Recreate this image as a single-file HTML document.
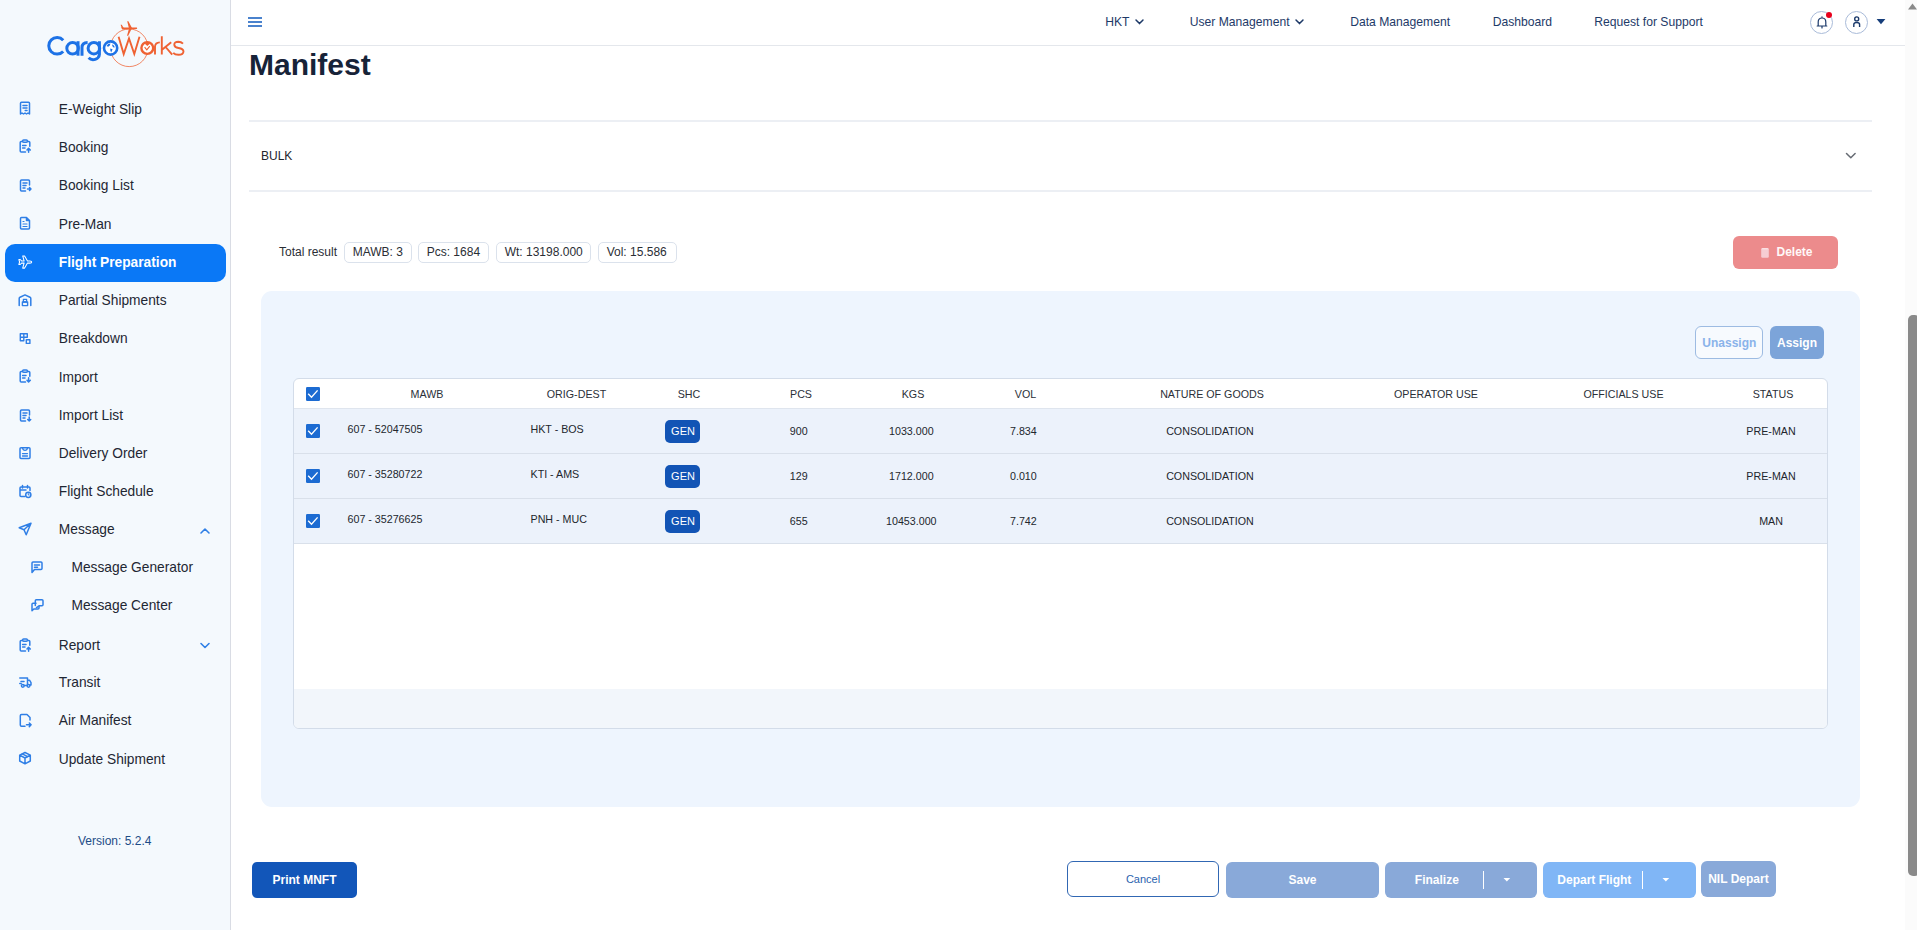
<!DOCTYPE html><html><head><meta charset="utf-8"><style>
*{box-sizing:border-box;margin:0;padding:0}
html,body{width:1917px;height:930px;overflow:hidden;background:#fff;font-family:"Liberation Sans",sans-serif;position:relative}
.a{position:absolute}
.t{position:absolute;white-space:nowrap;line-height:1}
.c{position:absolute;white-space:nowrap;line-height:1;width:240px;text-align:center}
#side{position:absolute;left:0;top:0;width:231px;height:930px;background:#f4f9fd;border-right:1px solid #d9dce4}
.si{font-size:13.75px;color:#1f2733}
.ic{position:absolute;overflow:visible}
.ic *{fill:none;stroke:#2f7fe6;stroke-width:1.5;stroke-linecap:round;stroke-linejoin:round}
#hdr{position:absolute;left:231px;top:0;width:1674px;height:46px;border-bottom:1px solid #e4e7ec;background:#fff}
.nav{font-size:12.15px;color:#1e3a68}
.th{font-size:10.7px;color:#2b3038}
.td{font-size:10.7px;color:#22262d}
.chip{position:absolute;top:242px;height:21px;border:1px solid #dbe2ec;border-radius:5px;background:#fff}
.cb{position:absolute;width:14px;height:14px;border-radius:2px;background:#1f6fd6}
.gen{position:absolute;width:35px;height:23px;border-radius:5px;background:#1254b5}
</style></head><body>
<div id="side"></div>
<svg class="a" style="left:40px;top:15px" width="150" height="60" viewBox="40 15 150 60">
<g fill="none" stroke="#1d72e6" stroke-width="3" stroke-linecap="butt">
<path d="M63.2 40.2 A8.3 8.3 0 1 0 63.2 51.4"/>
<circle cx="72.6" cy="48.3" r="5.8"/>
<path d="M78 41.2 V55.7"/>
<path d="M82 55.7 V47.5 Q82 42.4 87.6 42.4"/>
<circle cx="93.9" cy="48.2" r="5.8"/>
<path d="M99.4 41.2 V54.5 A6.2 5.5 0 0 1 88.6 57.8"/>
</g>
<circle cx="129.2" cy="47.8" r="18.8" fill="none" stroke="#ef6233" stroke-width="0.75"/>
<circle cx="110.6" cy="48" r="6.6" fill="#fff" stroke="#1d72e6" stroke-width="2.6"/>
<path d="M106.5 46 Q108 43.5 110.5 43.6 L109.8 45.5 L108.2 46.8 Z M110.2 48.6 L112.6 49.2 L111.2 52.6 L110.4 50.8 Z M112.4 44.2 Q114.6 45.4 114.8 47.6 L113 47.2 L112.2 45.6 Z" fill="#1d72e6"/>
<g fill="none" stroke="#ef6233" stroke-width="1.9" stroke-linejoin="miter">
<path d="M118.6 36.8 L123.7 54 L129 38.4 L134.3 54 L139.5 36.8"/>
<path d="M155 54.6 V46.5 Q155.3 42.6 159.8 42.4"/>
<path d="M161.8 36.2 V54.6 M171.2 42.2 L162 49.8 M165.6 47 L172.2 54.6"/>
<path d="M183 43.6 Q181.2 41.8 178.4 41.8 Q174.2 41.9 174.3 44.8 Q174.6 47.4 178.5 48 Q183.4 48.8 183.5 51.5 Q183.3 54.8 178.5 54.8 Q175 54.8 173.2 52.8"/>
</g>
<circle cx="147.3" cy="48" r="5.9" fill="#fff" stroke="#ef6233" stroke-width="2.4"/>
<path d="M144.6 47.2 l2.2 2.6 l3 -3.6" fill="none" stroke="#ef6233" stroke-width="1.1"/>
<path d="M144.5 43.6 Q147.3 42 150.2 43.6 L147.3 46z" fill="#ef6233"/>
<g fill="#ef6233">
<path d="M121 27.6 L136.8 27.4 Q137.6 28.3 136.8 29.1 L122.6 29.4 Z"/>
<path d="M127.2 21.2 L128.4 21.2 L132 28 L128.2 35.8 L127 35.8 L129 28.4 Z"/>
<path d="M120.6 24.8 L121.8 24.8 L124 28.4 L122.2 29.3 Z"/>
</g>
</svg>
<div class="a" style="left:5px;top:244px;width:221px;height:38px;border-radius:10px;background:#0a78f6"></div>
<div class="t si" style="left:58.8px;top:102.66px">E-Weight Slip</div>
<svg class="ic" style="left:17.5px;top:101.30px" width="14" height="14" viewBox="0 0 14 14"><path d="M2.5 2.2 Q2.5 1.2 3.5 1.2 H10.5 Q11.5 1.2 11.5 2.2 V13 L10 12 L8.5 13 L7 12 L5.5 13 L4 12 L2.5 13 Z"/><path d="M5 4.6 H9 M5 6.9 H9 M7.2 9.4 H9"/></svg>
<div class="t si" style="left:58.8px;top:140.76px">Booking</div>
<svg class="ic" style="left:17.5px;top:139.40px" width="14" height="14" viewBox="0 0 14 14"><path d="M4.3 2.6 H3.2 Q2.2 2.6 2.2 3.6 V12 Q2.2 13 3.2 13 H7.5 M9.7 2.6 H10.8 Q11.8 2.6 11.8 3.6 V7.2"/><path d="M4.6 2 Q4.6 1 5.6 1 H8.4 Q9.4 1 9.4 2 Q9.4 3.2 8.4 3.2 H5.6 Q4.6 3.2 4.6 2Z"/><path d="M4.6 6.5 H8 M4.6 9 H7"/><path d="M10.6 13.2 V9.6 M9 11 L10.6 9.3 L12.3 11"/></svg>
<div class="t si" style="left:58.8px;top:179.36px">Booking List</div>
<svg class="ic" style="left:17.5px;top:178.00px" width="14" height="14" viewBox="0 0 14 14"><path d="M11.5 7 V3 Q11.5 2 10.5 2 H3.5 Q2.5 2 2.5 3 V12 Q2.5 13 3.5 13 H7.5"/><path d="M5 5 H9 M5 7.5 H8 M5 10 H7"/><path d="M9.5 11 H13 M11.5 9.5 L13 11 L11.5 12.5"/></svg>
<div class="t si" style="left:58.8px;top:217.56px">Pre-Man</div>
<svg class="ic" style="left:17.5px;top:216.20px" width="14" height="14" viewBox="0 0 14 14"><path d="M8.5 1.5 H3.5 Q2.5 1.5 2.5 2.5 V12 Q2.5 13 3.5 13 H10.5 Q11.5 13 11.5 12 V4.5 Z M8.5 1.5 V4.5 H11.5"/><path d="M5 5.5 H6 M5 8 H9 M5 10.5 H9" style="stroke-width:1.2"/></svg>
<div class="t si" style="left:58.8px;top:255.86px;color:#fff;font-weight:bold">Flight Preparation</div>
<svg class="ic" style="left:17.5px;top:254.50px" width="14" height="14" viewBox="0 0 14 14"><path d="M0.9 4.5 H2.2 L3.6 5.9 H6.1 L4.7 0.9 H6.6 L9.5 5.9 H12 Q13.7 5.9 13.7 7 Q13.7 8.1 12 8.1 H9.5 L6.6 13.1 H4.7 L6.1 8.1 H3.6 L2.2 9.5 H0.9 L1.6 7 Z" style="stroke:#fff;stroke-width:1.05"/></svg>
<div class="t si" style="left:58.8px;top:294.06px">Partial Shipments</div>
<svg class="ic" style="left:17.5px;top:292.70px" width="14" height="14" viewBox="0 0 14 14"><path d="M1.2 12.6 V5.4 Q1.2 4.6 2 4.2 L7 1.9 L12 4.2 Q12.8 4.6 12.8 5.4 V12.6"/><rect x="4.4" y="9" width="5.2" height="3.6" style="stroke-width:1.4"/><rect x="5.4" y="6.4" width="3.2" height="2.6" style="stroke-width:1.3"/></svg>
<div class="t si" style="left:58.8px;top:332.36px">Breakdown</div>
<svg class="ic" style="left:17.5px;top:331.00px" width="14" height="14" viewBox="0 0 14 14"><path d="M2.3 2.8 H9.3 V6.3 H5.8 V9.8 H2.3 Z M5.8 2.8 V6.3 H2.3" style="stroke-width:1.4"/><rect x="8.3" y="8.8" width="3.6" height="3.6" style="stroke-width:1.4"/></svg>
<div class="t si" style="left:58.8px;top:370.56px">Import</div>
<svg class="ic" style="left:17.5px;top:369.20px" width="14" height="14" viewBox="0 0 14 14"><path d="M4.3 2.6 H3.2 Q2.2 2.6 2.2 3.6 V12 Q2.2 13 3.2 13 H7.5 M9.7 2.6 H10.8 Q11.8 2.6 11.8 3.6 V7.2"/><path d="M4.6 2 Q4.6 1 5.6 1 H8.4 Q9.4 1 9.4 2 Q9.4 3.2 8.4 3.2 H5.6 Q4.6 3.2 4.6 2Z"/><path d="M4.6 6.5 H8 M4.6 9 H7"/><path d="M10.6 8.8 V12.8 M9 11.3 L10.6 13 L12.3 11.3"/></svg>
<div class="t si" style="left:58.8px;top:408.86px">Import List</div>
<svg class="ic" style="left:17.5px;top:407.50px" width="14" height="14" viewBox="0 0 14 14"><path d="M11.5 7 V3 Q11.5 2 10.5 2 H3.5 Q2.5 2 2.5 3 V12 Q2.5 13 3.5 13 H7.5"/><path d="M5 5 H9 M5 7.5 H8 M5 10 H7"/><path d="M11.2 9 V13 M9.7 11.5 L11.2 13 L12.7 11.5"/></svg>
<div class="t si" style="left:58.8px;top:447.06px">Delivery Order</div>
<svg class="ic" style="left:17.5px;top:445.70px" width="14" height="14" viewBox="0 0 14 14"><rect x="2" y="1.8" width="10" height="10.6" rx="1"/><path d="M4.6 2.2 Q5 4.4 7 4.4 Q9 4.4 9.4 2.2 M4.5 7.6 H9.5 M4.5 10 H9.5" style="stroke-width:1.3"/></svg>
<div class="t si" style="left:58.8px;top:485.26px">Flight Schedule</div>
<svg class="ic" style="left:17.5px;top:483.90px" width="14" height="14" viewBox="0 0 14 14"><path d="M7 12.5 H3 Q2 12.5 2 11.5 V4 Q2 3 3 3 H11 Q12 3 12 4 V6.5 M2 6 H8 M4.5 1.5 V4 M9.5 1.5 V4"/><circle cx="10.3" cy="10.8" r="2.6"/><path d="M10.3 9.6 V11 H11.2" style="stroke-width:1"/></svg>
<div class="t si" style="left:58.8px;top:523.36px">Message</div>
<svg class="ic" style="left:17.5px;top:522.00px" width="14" height="14" viewBox="0 0 14 14"><path d="M13 1.2 L1.2 5.8 L6 7.8 L8.2 12.8 Z M13 1.2 L6 7.8"/></svg>
<div class="t si" style="left:71.5px;top:561.46px">Message Generator</div>
<svg class="ic" style="left:29.5px;top:560.10px" width="14" height="14" viewBox="0 0 14 14"><path d="M2 12.5 V3 Q2 2 3 2 H11 Q12 2 12 3 V8.5 Q12 9.5 11 9.5 H4.5 Z"/><path d="M4.5 5 H9.5 M4.5 7.2 H7.5"/></svg>
<div class="t si" style="left:71.5px;top:599.46px">Message Center</div>
<svg class="ic" style="left:29.5px;top:598.10px" width="14" height="14" viewBox="0 0 14 14"><path d="M6 5.2 H3 Q2 5.2 2 6.2 V12.8 L3.8 11 H8 Q9 11 9 10 V8.6"/><path d="M5.3 7.5 V2.8 Q5.3 1.8 6.3 1.8 H12 Q13 1.8 13 2.8 V6.8 Q13 7.8 12 7.8 H9 L6.5 9.6"/></svg>
<div class="t si" style="left:58.8px;top:639.06px">Report</div>
<svg class="ic" style="left:17.5px;top:637.70px" width="14" height="14" viewBox="0 0 14 14"><path d="M4.3 2.6 H3.2 Q2.2 2.6 2.2 3.6 V12 Q2.2 13 3.2 13 H7.5 M9.7 2.6 H10.8 Q11.8 2.6 11.8 3.6 V7.2"/><path d="M4.6 2 Q4.6 1 5.6 1 H8.4 Q9.4 1 9.4 2 Q9.4 3.2 8.4 3.2 H5.6 Q4.6 3.2 4.6 2Z"/><path d="M4.6 6.5 H8 M4.6 9 H7"/><path d="M10.6 13.2 V9.6 M9 11 L10.6 9.3 L12.3 11"/></svg>
<div class="t si" style="left:58.8px;top:676.46px">Transit</div>
<svg class="ic" style="left:17.5px;top:675.10px" width="14" height="14" viewBox="0 0 14 14"><path d="M1.8 3 H9.5 V10 M3 6.5 H6 M1.8 8.5 H3.2 M9.5 5.2 H11.5 L13 7.6 V10 H12"/><circle cx="4.8" cy="10.8" r="1.4"/><circle cx="10.5" cy="10.8" r="1.4"/><path d="M6.3 10.5 H9"/></svg>
<div class="t si" style="left:58.8px;top:714.46px">Air Manifest</div>
<svg class="ic" style="left:17.5px;top:713.10px" width="14" height="14" viewBox="0 0 14 14"><path d="M12 7 V4.5 L9 1.5 H3.5 Q2.3 1.5 2.3 2.7 V12 Q2.3 13.2 3.5 13.2 H7"/><path d="M8.5 11.8 H13 M11.3 10 L13.1 11.8 L11.3 13.6"/></svg>
<div class="t si" style="left:58.8px;top:752.76px">Update Shipment</div>
<svg class="ic" style="left:17.5px;top:751.40px" width="14" height="14" viewBox="0 0 14 14"><path d="M7 1.5 L12.3 4.2 V10 L7 12.8 L1.7 10 V4.2 Z M1.7 4.2 L7 7 L12.3 4.2 M7 7 V12.8"/><path d="M4.3 2.8 L9.6 5.6"/></svg>
<svg class="ic" style="left:199px;top:525px" width="12" height="10" viewBox="0 0 12 10"><path d="M2 8 L6 4 L10 8" style="stroke:#2f7fe6;stroke-width:1.6"/></svg>
<svg class="ic" style="left:199px;top:640px" width="12" height="10" viewBox="0 0 12 10"><path d="M2 3.5 L6 7.5 L10 3.5" style="stroke:#2f7fe6;stroke-width:1.6"/></svg>
<div class="t" style="left:78px;top:834.84px;font-size:12px;color:#1d4c86">Version: 5.2.4</div>
<div id="hdr"></div>
<div class="a" style="left:248px;top:17px;width:14px;height:2px;background:#4a82cd"></div>
<div class="a" style="left:248px;top:21px;width:14px;height:2px;background:#4a82cd"></div>
<div class="a" style="left:248px;top:25px;width:14px;height:2px;background:#4a82cd"></div>
<div class="t nav" style="left:1105.2px;top:15.94px">HKT</div>
<div class="t nav" style="left:1189.7px;top:15.94px">User Management</div>
<div class="t nav" style="left:1350.2px;top:15.94px">Data Management</div>
<div class="t nav" style="left:1492.7px;top:15.94px">Dashboard</div>
<div class="t nav" style="left:1594.2px;top:15.94px">Request for Support</div>
<svg class="ic" style="left:1135px;top:18px" width="10" height="8" viewBox="0 0 10 8"><path d="M1 2 L4.5 5.6 L8 2" style="stroke:#1e3a68;stroke-width:1.5"/></svg>
<svg class="ic" style="left:1295px;top:18px" width="10" height="8" viewBox="0 0 10 8"><path d="M1 2 L4.5 5.6 L8 2" style="stroke:#1e3a68;stroke-width:1.5"/></svg>
<div class="a" style="left:1810px;top:11px;width:23px;height:23px;border-radius:50%;border:1px solid #a9bbd9"></div>
<svg class="ic" style="left:1814px;top:14px" width="16" height="16" viewBox="0 0 16 16"><path d="M4.2 12 V8 Q4.2 4 8 4 Q11.8 4 11.8 8 V12 H3.2 H12.8 M8 4 V2.8 M8 12 V14" style="stroke:#1c3a6b;stroke-width:1.2"/></svg>
<div class="a" style="left:1826px;top:12px;width:6px;height:6px;border-radius:50%;background:#e8001c"></div>
<div class="a" style="left:1845px;top:11px;width:23px;height:23px;border-radius:50%;border:1px solid #a9bbd9"></div>
<svg class="ic" style="left:1849px;top:14px" width="16" height="16" viewBox="0 0 16 16"><circle cx="7.7" cy="4.9" r="2" style="stroke:#1c3a6b;stroke-width:1.4"/><path d="M4.8 13 V10.5 Q4.8 8.5 7.7 8.5 Q10.6 8.5 10.6 10.5 V13" style="stroke:#1c3a6b;stroke-width:1.4;stroke-linecap:butt"/></svg>
<svg class="a" style="left:1876px;top:19px" width="10" height="6" viewBox="0 0 10 6"><path d="M0.6 0 H9.4 L5 5.2 Z" fill="#153d7a"/></svg>
<div class="a" style="left:1905px;top:0;width:12px;height:930px;background:#fbfbfb"></div>
<svg class="a" style="left:1906px;top:1px" width="11" height="10" viewBox="0 0 11 10"><path d="M2 8.5 L6.5 2.6 L11 8.5 Z" fill="#8a8a8a"/></svg>
<div class="a" style="left:1908px;top:315px;width:12px;height:561px;border-radius:5px;background:#8a8a8a"></div>
<div class="t" style="left:249px;top:49.6px;font-size:30px;font-weight:bold;color:#172338">Manifest</div>
<div class="a" style="left:249px;top:120px;width:1623px;height:1.5px;background:#eceff4"></div>
<div class="t" style="left:261px;top:149.84px;font-size:12px;color:#23262c">BULK</div>
<svg class="ic" style="left:1845px;top:152px" width="12" height="8" viewBox="0 0 12 8"><path d="M1.5 1.5 L5.8 5.8 L10.1 1.5" style="stroke:#666b73;stroke-width:1.5"/></svg>
<div class="a" style="left:249px;top:190px;width:1623px;height:1.5px;background:#eceff4"></div>
<div class="t" style="left:279px;top:245.84px;font-size:12px;color:#2a2e35">Total result</div>
<div class="chip" style="left:344px;width:68px"></div>
<div class="t" style="left:352.7px;top:245.84px;font-size:12px;color:#2a2e35">MAWB: 3</div>
<div class="chip" style="left:418px;width:71px"></div>
<div class="t" style="left:426.7px;top:245.84px;font-size:12px;color:#2a2e35">Pcs: 1684</div>
<div class="chip" style="left:496px;width:95px"></div>
<div class="t" style="left:504.7px;top:245.84px;font-size:12px;color:#2a2e35">Wt: 13198.000</div>
<div class="chip" style="left:598px;width:79px"></div>
<div class="t" style="left:606.7px;top:245.84px;font-size:12px;color:#2a2e35">Vol: 15.586</div>
<div class="a" style="left:1733px;top:236px;width:105px;height:33px;border-radius:6px;background:#ec8b8c"></div>
<svg class="a" style="left:1760px;top:247px" width="10" height="12" viewBox="0 0 10 12"><path d="M1.2 2.2 Q1.2 1 2.4 1 H7.6 Q8.8 1 8.8 2.2 V9.6 Q8.8 10.8 7.6 10.8 H2.4 Q1.2 10.8 1.2 9.6 Z" fill="#f6cdd2"/><path d="M2.2 1.8 H7.8" stroke="#fde9ea" stroke-width="1"/></svg>
<div class="t" style="left:1776.5px;top:245.84px;font-size:12px;font-weight:bold;color:#fff8f8">Delete</div>
<div class="a" style="left:261px;top:291px;width:1599px;height:516px;border-radius:11px;background:#eef5fe"></div>
<div class="a" style="left:1695px;top:326px;width:68px;height:33px;border-radius:6px;border:1px solid #9dbbe2;background:#f7fafe"></div>
<div class="t" style="left:1702.3px;top:336.84px;font-size:12px;font-weight:bold;color:#8ab3ea">Unassign</div>
<div class="a" style="left:1770px;top:326px;width:54px;height:33px;border-radius:6px;background:#7ca4d9"></div>
<div class="t" style="left:1777px;top:336.84px;font-size:12px;font-weight:bold;color:#fff">Assign</div>
<div class="a" style="left:293px;top:378px;width:1535px;height:351px;border-radius:6px;background:#fff;border:1px solid #d3dce9;overflow:hidden"><div class="a" style="left:0;top:29px;width:100%;height:1px;background:#dfe5ee"></div><div class="a" style="left:0;top:30px;width:100%;height:44px;background:#ecf2fb"></div><div class="a" style="left:0;top:74px;width:100%;height:1px;background:#d9e0ea"></div><div class="a" style="left:0;top:75px;width:100%;height:44px;background:#ecf2fb"></div><div class="a" style="left:0;top:119px;width:100%;height:1px;background:#d9e0ea"></div><div class="a" style="left:0;top:120px;width:100%;height:44px;background:#ecf2fb"></div><div class="a" style="left:0;top:164px;width:100%;height:1px;background:#d9e0ea"></div><div class="a" style="left:0;top:310px;width:100%;height:40px;background:#f2f6fb"></div></div>
<svg class="a" style="left:306px;top:387px" width="14" height="14" viewBox="0 0 14 14"><rect x="0" y="0" width="14" height="14" rx="1.3" fill="#1c6bd2"/><path d="M2.2 6.7 L5.5 10.2 L11.6 3.4" fill="none" stroke="#fff" stroke-width="1.35"/></svg>
<div class="c th" style="left:307px;top:388.94px">MAWB</div>
<div class="c th" style="left:456.5px;top:388.94px">ORIG-DEST</div>
<div class="c th" style="left:569px;top:388.94px">SHC</div>
<div class="c th" style="left:681px;top:388.94px">PCS</div>
<div class="c th" style="left:793px;top:388.94px">KGS</div>
<div class="c th" style="left:905.5px;top:388.94px">VOL</div>
<div class="c th" style="left:1092px;top:388.94px">NATURE OF GOODS</div>
<div class="c th" style="left:1316px;top:388.94px">OPERATOR USE</div>
<div class="c th" style="left:1503.5px;top:388.94px">OFFICIALS USE</div>
<div class="c th" style="left:1653px;top:388.94px">STATUS</div>
<svg class="a" style="left:306px;top:424px" width="14" height="14" viewBox="0 0 14 14"><rect x="0" y="0" width="14" height="14" rx="1.3" fill="#1c6bd2"/><path d="M2.2 6.7 L5.5 10.2 L11.6 3.4" fill="none" stroke="#fff" stroke-width="1.35"/></svg>
<div class="t td" style="left:347.5px;top:423.94px">607 - 52047505</div>
<div class="t td" style="left:530.5px;top:423.94px">HKT - BOS</div>
<div class="gen" style="left:665px;top:420px"></div>
<div class="c" style="left:563px;top:425.69px;font-size:11px;color:#fff">GEN</div>
<div class="t td" style="left:789.8px;top:425.94px">900</div>
<div class="c td" style="left:791.3px;top:425.94px">1033.000</div>
<div class="c td" style="left:903.4px;top:425.94px">7.834</div>
<div class="c td" style="left:1090px;top:425.94px">CONSOLIDATION</div>
<div class="c td" style="left:1651px;top:425.94px">PRE-MAN</div>
<svg class="a" style="left:306px;top:469px" width="14" height="14" viewBox="0 0 14 14"><rect x="0" y="0" width="14" height="14" rx="1.3" fill="#1c6bd2"/><path d="M2.2 6.7 L5.5 10.2 L11.6 3.4" fill="none" stroke="#fff" stroke-width="1.35"/></svg>
<div class="t td" style="left:347.5px;top:468.94px">607 - 35280722</div>
<div class="t td" style="left:530.5px;top:468.94px">KTI - AMS</div>
<div class="gen" style="left:665px;top:465px"></div>
<div class="c" style="left:563px;top:470.69px;font-size:11px;color:#fff">GEN</div>
<div class="t td" style="left:789.8px;top:470.94px">129</div>
<div class="c td" style="left:791.3px;top:470.94px">1712.000</div>
<div class="c td" style="left:903.4px;top:470.94px">0.010</div>
<div class="c td" style="left:1090px;top:470.94px">CONSOLIDATION</div>
<div class="c td" style="left:1651px;top:470.94px">PRE-MAN</div>
<svg class="a" style="left:306px;top:514px" width="14" height="14" viewBox="0 0 14 14"><rect x="0" y="0" width="14" height="14" rx="1.3" fill="#1c6bd2"/><path d="M2.2 6.7 L5.5 10.2 L11.6 3.4" fill="none" stroke="#fff" stroke-width="1.35"/></svg>
<div class="t td" style="left:347.5px;top:513.94px">607 - 35276625</div>
<div class="t td" style="left:530.5px;top:513.94px">PNH - MUC</div>
<div class="gen" style="left:665px;top:510px"></div>
<div class="c" style="left:563px;top:515.69px;font-size:11px;color:#fff">GEN</div>
<div class="t td" style="left:789.8px;top:515.94px">655</div>
<div class="c td" style="left:791.3px;top:515.94px">10453.000</div>
<div class="c td" style="left:903.4px;top:515.94px">7.742</div>
<div class="c td" style="left:1090px;top:515.94px">CONSOLIDATION</div>
<div class="c td" style="left:1651px;top:515.94px">MAN</div>
<div class="a" style="left:252px;top:862px;width:105px;height:36px;border-radius:5px;background:#1256b9"></div>
<div class="c" style="left:184.5px;top:873.84px;font-size:12px;font-weight:bold;color:#fff">Print MNFT</div>
<div class="a" style="left:1067px;top:861px;width:152px;height:36px;border-radius:6px;border:1.3px solid #3167b3;background:#fff"></div>
<div class="c" style="left:1023px;top:873.89px;font-size:11px;color:#2b62ae">Cancel</div>
<div class="a" style="left:1226px;top:862px;width:153px;height:36px;border-radius:6px;background:#89a9d9"></div>
<div class="c" style="left:1182.5px;top:874.14px;font-size:12px;font-weight:bold;color:#fff">Save</div>
<div class="a" style="left:1385px;top:862px;width:152px;height:36px;border-radius:6px;background:#89a9d9"></div>
<div class="t" style="left:1414.8px;top:874.14px;font-size:12px;font-weight:bold;color:#fff">Finalize</div>
<div class="a" style="left:1483px;top:871px;width:1px;height:18px;background:#fff"></div>
<svg class="a" style="left:1503px;top:877px" width="8" height="6" viewBox="0 0 8 6"><path d="M0.5 1 H7.2 L3.85 4.6Z" fill="#fff"/></svg>
<div class="a" style="left:1543px;top:862px;width:153px;height:36px;border-radius:6px;background:#80b6f6"></div>
<div class="t" style="left:1557.3px;top:874.14px;font-size:12px;font-weight:bold;color:#fff">Depart Flight</div>
<div class="a" style="left:1642px;top:871px;width:1px;height:18px;background:#fff"></div>
<svg class="a" style="left:1662px;top:877px" width="8" height="6" viewBox="0 0 8 6"><path d="M0.5 1 H7.2 L3.85 4.6Z" fill="#fff"/></svg>
<div class="a" style="left:1701px;top:861px;width:75px;height:36px;border-radius:6px;background:#89a9d9"></div>
<div class="t" style="left:1708.2px;top:873.04px;font-size:12px;font-weight:bold;color:#fff">NIL Depart</div>
</body></html>
